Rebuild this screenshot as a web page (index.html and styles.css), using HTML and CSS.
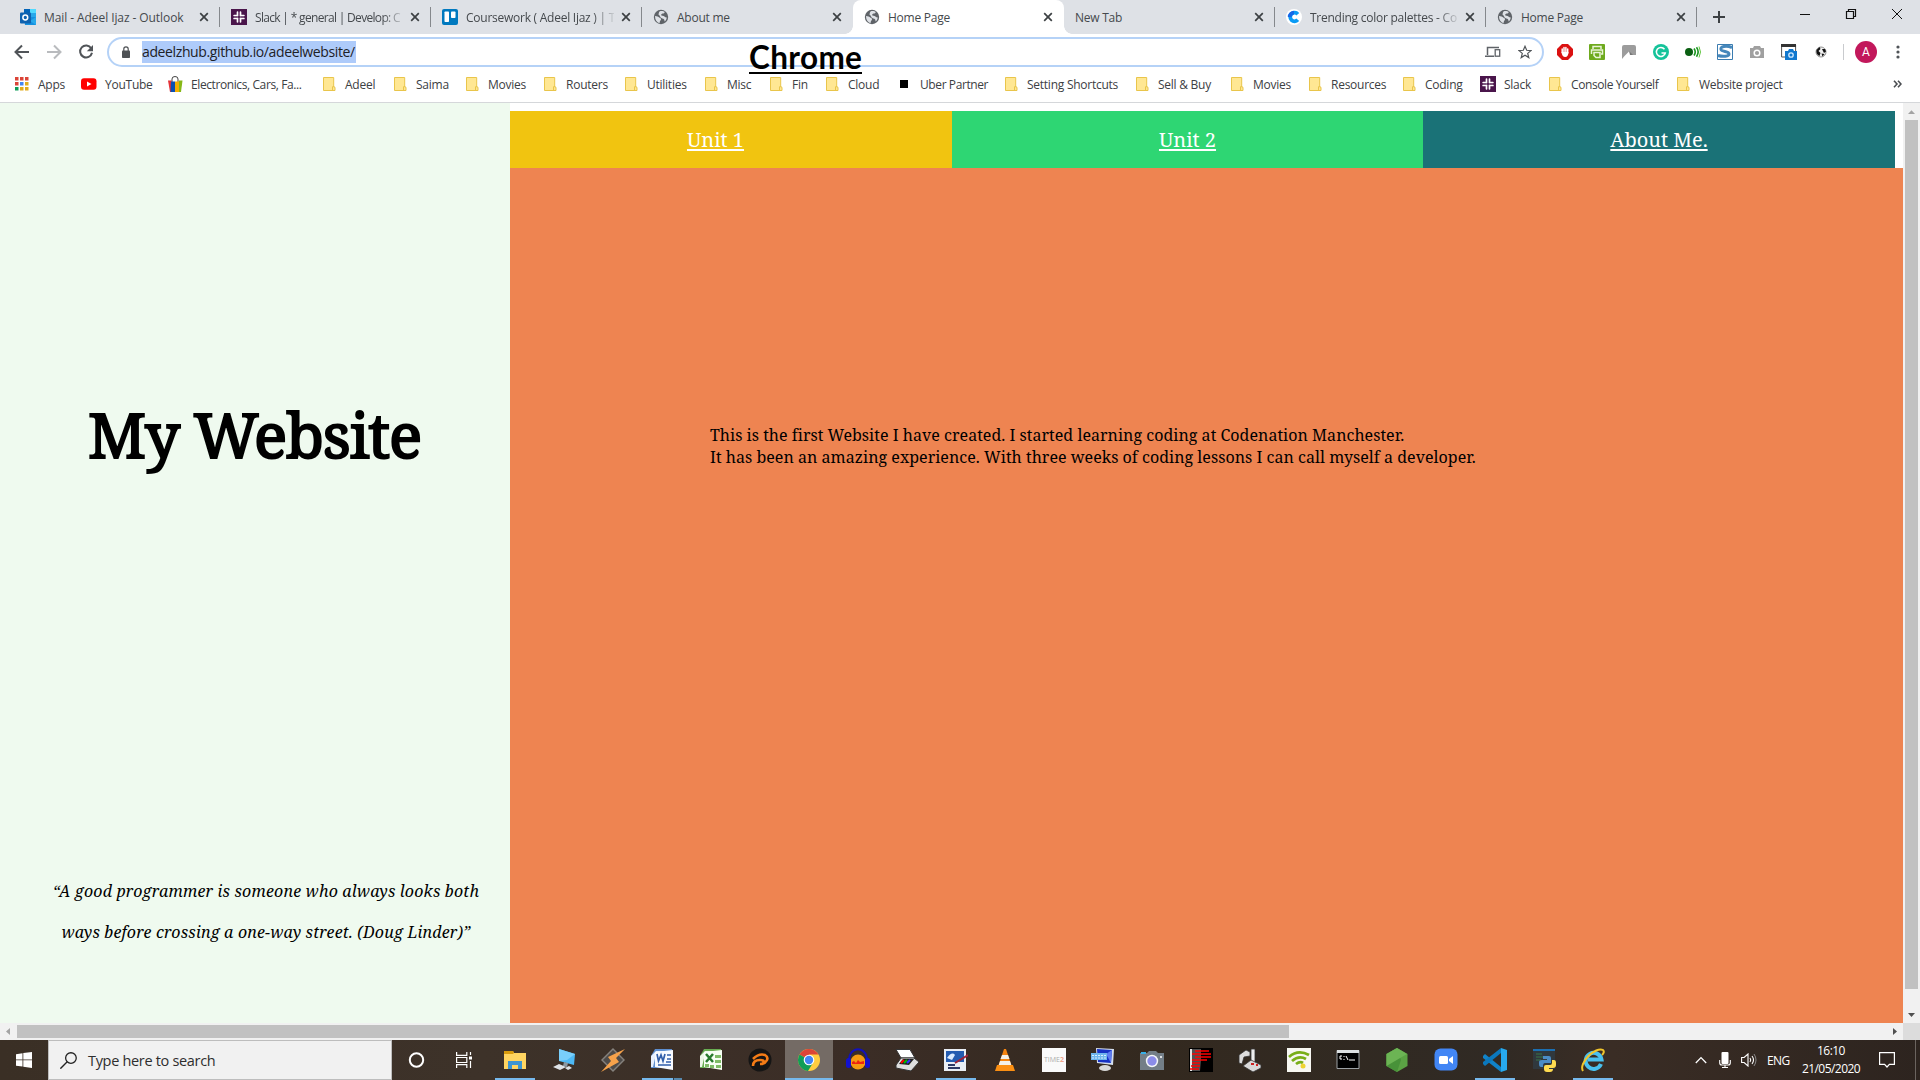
FILE: index.html
```html
<!DOCTYPE html>
<html lang="en">
<head>
<meta charset="utf-8">
<title>Home Page</title>
<link rel="stylesheet" href="styles.css">
</head>
<body>
<svg class="defs" width="0" height="0" aria-hidden="true">
  <symbol id="globe" viewBox="0 0 16 16"><circle cx="8" cy="8" r="7.2" fill="#5f6368"/><path d="M2 7c2 .2 3.500.6 4.300 1.500.8.8 1.800.6 1.700 1.700 0 1-1 1.200-1.200 2.500l-.3 1.500C3.800 13.500 2 11 2 7zM6.500 2.500c1.500-.8 4-.5 5.200.6-.2 1.200-1.200 1.600-2.200 1.500-.8 0-.7 1-1.600 1.200.3 1 1.600.9 2.600 1.300 1 .3 1.300 1.400 3.300 1.300-.2 1.500-.9 3-2.100 4-.5-1.200-.2-2.200-1.400-2.600-1.300-.4-2.800-.8-3.200-2.200C6.800 6.500 6 6 5.300 5.200c.8-.6.3-1.700 1.200-2.700z" fill="#dee1e6"/></symbol>
  <symbol id="x" viewBox="0 0 10 10"><path d="M1.200 1.200l7.600 7.600M8.800 1.200L1.200 8.800" stroke="#3c4043" stroke-width="1.700"/></symbol>
  <symbol id="slack" viewBox="0 0 16 16"><path d="M0 0h16v16H0z" fill="#4a154b"/><path d="M6.600 3.200v3.600M9.400 9.200v3.600M3.200 9.400h3.600M9.200 6.600h3.600M3.200 6.600h.6M12.200 9.400h.6M9.400 3.200v.6M6.600 12.200v.6M9.400 3.200v3.600M6.600 9.200v3.600M3.200 6.600h3.600M9.200 9.400h3.600" stroke="#fff" stroke-width="1.900" stroke-linecap="round"/><path d="M8 2v12M2 8h12" stroke="#4a154b" stroke-width=".8"/></symbol>
  <symbol id="folder" viewBox="0 0 13 14"><path d="M.5.5h10.200v9.200l1.300.6v3.200H.5z" fill="#ffe793" stroke="#e9c54b"/><path d="M9.500 13V9.700h1.700" fill="none" stroke="#e9c54b"/></symbol>
</svg>

<header class="browser">
  <div class="tabs">
    <div class="tab"><svg class="fav" viewBox="0 0 16 16"><path d="M4 0h12v8H4z" fill="#28a8ea"/><path d="M10 0h6v4h-6z" fill="#50d9ff"/><path d="M4 0h6v4H4z" fill="#0364b8"/><path d="M4 8h12v8H5z" fill="#1490df"/><path d="M16 8l-6 4 6 4z" fill="#28a8ea"/><rect y="3.500" width="11" height="11" rx="1" fill="#0f62af"/><circle cx="5.300" cy="8.500" r="2.400" fill="none" stroke="#fff" stroke-width="1.500"/></svg><span class="name wide">Mail - Adeel Ijaz - Outlook</span><svg class="close"><use href="#x"/></svg></div>
    <div class="tab sep"><svg class="fav"><use href="#slack"/></svg><span class="name fade tight">Slack | * general | Develop: C</span><svg class="close"><use href="#x"/></svg></div>
    <div class="tab sep"><svg class="fav" viewBox="0 0 16 16"><rect width="16" height="16" rx="2" fill="#0079bf"/><rect x="2.500" y="2.500" width="4.500" height="10.500" rx=".8" fill="#fff"/><rect x="9" y="2.500" width="4.500" height="6.500" rx=".8" fill="#fff"/></svg><span class="name fade">Coursework ( Adeel Ijaz ) | T</span><svg class="close"><use href="#x"/></svg></div>
    <div class="tab sep"><svg class="fav"><use href="#globe"/></svg><span class="name">About me</span><svg class="close"><use href="#x"/></svg></div>
    <div class="tab active"><svg class="fav"><use href="#globe"/></svg><span class="name">Home Page</span><svg class="close"><use href="#x"/></svg></div>
    <div class="tab"><span class="name">New Tab</span><svg class="close"><use href="#x"/></svg></div>
    <div class="tab sep"><svg class="fav" viewBox="0 0 16 16"><circle cx="8" cy="8" r="8" fill="#fff"/><path d="M11.800 5.200A4.300 4.300 0 1 0 11.800 10.800" fill="none" stroke="#0a9bf5" stroke-width="3.800"/><path d="M8 3.700a4.300 4.300 0 0 0-4.300 4.300" fill="none" stroke="#1668e8" stroke-width="3.800"/></svg><span class="name fade">Trending color palettes - Co</span><svg class="close"><use href="#x"/></svg></div>
    <div class="tab sep"><svg class="fav"><use href="#globe"/></svg><span class="name">Home Page</span><svg class="close"><use href="#x"/></svg></div>
    <div class="tabend sep"><svg width="12" height="12" viewBox="0 0 12 12"><path d="M6 0v12M0 6h12" stroke="#3c4043" stroke-width="2"/></svg></div>
    <div class="winbtns">
      <svg viewBox="0 0 12 12"><path d="M1 6.500h10" stroke="#111"/></svg>
      <svg viewBox="0 0 12 12"><path d="M1.500 3.500h7v7h-7zM3.500 3.500v-2h7v7h-2" fill="none" stroke="#111" stroke-width="1.200"/></svg>
      <svg viewBox="0 0 12 12"><path d="M1 1l10 10M11 1L1 11" stroke="#111"/></svg>
    </div>
  </div>

  <div class="toolbar">
    <div class="navbtns">
      <svg viewBox="0 0 16 16"><path d="M15 8H2M8 1.500L1.500 8 8 14.500" fill="none" stroke="#505458" stroke-width="2"/></svg>
      <svg viewBox="0 0 16 16"><path d="M1 8h13M8 1.500L14.500 8 8 14.500" fill="none" stroke="#b9bbbe" stroke-width="2"/></svg>
      <svg viewBox="0 0 16 16"><path d="M13.200 4.200A6 6 0 1 0 14 8.800" fill="none" stroke="#505458" stroke-width="2"/><path d="M15 1v6.200H8.800z" fill="#505458"/></svg>
    </div>
    <div class="omnibox">
      <svg class="lock" viewBox="0 0 8 12"><rect y="4.500" width="8" height="7.500" rx=".8" fill="#4f5256"/><path d="M1.800 5V3a2.200 2.200 0 0 1 4.400 0v2" fill="none" stroke="#4f5256" stroke-width="1.200"/></svg>
      <span class="url">adeelzhub.github.io/adeelwebsite/</span>
      <svg class="devices" viewBox="0 0 16 12"><path d="M2.500 9V1.500H14M0 10.200h9" fill="none" stroke="#5f6368" stroke-width="1.500"/><rect x="10.200" y="3.700" width="4.500" height="6.500" fill="none" stroke="#5f6368" stroke-width="1.300"/></svg>
      <svg class="star" viewBox="0 0 14 14"><path d="M7 1.300l1.700 4 4.300.3-3.300 2.800 1.100 4.200L7 10.300l-3.800 2.300 1.100-4.200L1 5.600l4.300-.3z" fill="none" stroke="#505458" stroke-width="1.200"/></svg>
    </div>
    <div class="exts">
      <svg viewBox="0 0 16 16"><path d="M5 0h6l5 5v6l-5 5H5l-5-5V5z" fill="#db1010"/><path d="M5.200 8.500V5M7 8V3.500M8.900 8V3.500M10.700 9V5" stroke="#fff" stroke-width="1.500" stroke-linecap="round"/><path d="M4.500 8h7c0 3-1.300 5-3.300 5s-3.500-2-3.700-5z" fill="#fff"/></svg>
      <svg viewBox="0 0 16 16"><rect width="16" height="16" rx="1" fill="#6eaa1e"/><path d="M4 5V2.500h8V5M2.500 10V6h11v4H12M5 8.500h6v5H7l-2-2z" fill="none" stroke="#e9f4d8" stroke-width="1.500"/></svg>
      <svg viewBox="0 0 16 16"><path d="M3 1h10q2 0 2 2v8H11L8 7.500 3.500 12 1 15V3q0-2 2-2z" fill="#9c9c9c"/><path d="M8 7l4 4H9z" fill="#777"/></svg>
      <svg viewBox="0 0 16 16"><circle cx="8" cy="8" r="8" fill="#15c39a"/><path d="M11.500 5.200A4.500 4.500 0 1 0 12.300 9H8.500" fill="none" stroke="#fff" stroke-width="1.500"/></svg>
      <svg viewBox="0 0 16 16"><circle cx="4" cy="8" r="4" fill="#0a5f12"/><path d="M9 4.500q2.500 3.500 0 7M11.500 3.300q3.300 4.700 0 9.400" fill="none" stroke="#18961e" stroke-width="1.600"/><path d="M14 2.500q3 5.500 0 11" fill="none" stroke="#5fc43e"/></svg>
      <svg viewBox="0 0 16 16"><path d="M.5.5h15v15H.5z" fill="#fff" stroke="#3b7cb0"/><path d="M15 3.500C9 1 3 2.500 4 5.500c1 2.500 8 1.500 8 4.500 0 2.500-6 3-11 1.500" fill="none" stroke="#4587bb" stroke-width="3"/></svg>
      <svg viewBox="0 0 16 16"><path d="M5 2h6l1 2h3v10H1V4h3z" fill="#a0a0a0"/><circle cx="8" cy="9" r="2.800" fill="none" stroke="#fff" stroke-width="1.500"/></svg>
      <svg viewBox="0 0 16 16"><path d="M.6 1h14v12H.6z" fill="#fff" stroke="#555"/><path d="M0 0h15v3H0z" fill="#333"/><path d="M4 7h3l1-2h4l1 2h3v9H4z" fill="#1178ce"/><circle cx="10" cy="11" r="2.200" fill="none" stroke="#d2eaff" stroke-width="1.300"/></svg>
      <svg viewBox="0 0 16 16"><circle cx="8" cy="8" r="5" fill="#f0f0f0" stroke="#777" stroke-width=".8"/><path d="M3.500 6l3-3 1 2-2 2 2 2-1 3C4 11 3 9 3.500 6zM9 5l3 0 1 2.500-2 1.500zM8.500 9.500l3 .5-2 2.500z" fill="#111"/></svg>
    </div>
    <span class="bar"></span>
    <span class="avatar">A</span>
    <svg class="menu" viewBox="0 0 4 14"><circle cx="2" cy="2" r="1.600"/><circle cx="2" cy="7" r="1.600"/><circle cx="2" cy="12" r="1.600"/></svg>
  </div>
  <div class="caption">Chrome</div>

  <div class="bookmarks">
    <div><svg class="apps" viewBox="0 0 14 14"><path d="M0 0h3.500v3.500H0zM5 0h3.500v3.500H5zM10 0h3.500v3.500H10zM0 5h3.500v3.500H0z" fill="#db4437"/><path d="M5 5h3.500v3.500H5z" fill="#4285f4"/><path d="M10 5h3.500v3.500H10zM10 10h3.500v3.500H10zM5 10h3.500v3.500H5z" fill="#e2ab1d"/><path d="M0 10h3.500v3.500H0z" fill="#0f9d58"/></svg>Apps</div>
    <div><svg class="ic16" viewBox="0 0 16 16"><rect y="2.300" width="15.500" height="11.400" rx="3" fill="#f00"/><path d="M6 5.500v5L10.500 8z" fill="#fff"/></svg>YouTube</div>
    <div class="tight"><svg class="ic15" viewBox="0 0 15 16"><path d="M4 6V3q0-2.500 3-2.500T10 3v3" fill="none" stroke="#444"/><path d="M0 4.500h3.500v11.500H2z" fill="#e53238"/><path d="M3 5.500h4V16H2.500z" fill="#0b4fb3"/><path d="M7 5.500h4V16H7z" fill="#f5af02"/><path d="M11 4.500h3.500L13 16h-2z" fill="#86b817"/></svg>Electronics, Cars, Fa...</div>
    <div><svg class="fold"><use href="#folder"/></svg>Adeel</div>
    <div><svg class="fold"><use href="#folder"/></svg>Saima</div>
    <div><svg class="fold"><use href="#folder"/></svg>Movies</div>
    <div><svg class="fold"><use href="#folder"/></svg>Routers</div>
    <div><svg class="fold"><use href="#folder"/></svg>Utilities</div>
    <div><svg class="fold"><use href="#folder"/></svg>Misc</div>
    <div><svg class="fold"><use href="#folder"/></svg>Fin</div>
    <div><svg class="fold"><use href="#folder"/></svg>Cloud</div>
    <div class="tight"><i class="uber"></i>Uber Partner</div>
    <div><svg class="fold"><use href="#folder"/></svg>Setting Shortcuts</div>
    <div><svg class="fold"><use href="#folder"/></svg>Sell &amp; Buy</div>
    <div><svg class="fold"><use href="#folder"/></svg>Movies</div>
    <div><svg class="fold"><use href="#folder"/></svg>Resources</div>
    <div><svg class="fold"><use href="#folder"/></svg>Coding</div>
    <div><svg class="ic16"><use href="#slack"/></svg>Slack</div>
    <div class="tight"><svg class="fold"><use href="#folder"/></svg>Console Yourself</div>
    <div><svg class="fold"><use href="#folder"/></svg>Website project</div>
    <div><svg class="more" viewBox="0 0 9 8"><path d="M1 .8L4 4 1 7.200M5 .8L8 4 5 7.200" fill="none" stroke="#4a4d51" stroke-width="1.600"/></svg></div>
  </div>
</header>

<main class="viewport">
  <aside class="side">
    <h1>My Website</h1>
    <p class="quote">“A good programmer is someone who always looks both<br>ways before crossing a one-way street. (Doug Linder)”</p>
  </aside>
  <section class="content">
    <nav class="units">
      <a class="u1" href="#">Unit 1</a>
      <a class="u2" href="#">Unit 2</a>
      <a class="u3" href="#">About Me.</a>
    </nav>
    <div class="intro">
      <p>This is the first Website I have created. I started learning coding at Codenation Manchester.</p>
      <p>It has been an amazing experience. With three weeks of coding lessons I can call myself a developer.</p>
    </div>
  </section>
  <div class="vscroll">
    <svg viewBox="0 0 17 17"><path d="M5 11h7L8.500 7.200z" fill="#a3a3a3"/></svg>
    <div class="thumb"></div>
    <svg viewBox="0 0 17 17"><path d="M5 7h7L8.500 11z" fill="#505050"/></svg>
  </div>
</main>
<div class="hscroll">
  <svg viewBox="0 0 17 17"><path d="M10 5v7L6 8.500z" fill="#a3a3a3"/></svg>
  <div class="track"><div class="thumb"></div></div>
  <svg viewBox="0 0 17 17"><path d="M7 5v7l4-3.500z" fill="#505050"/></svg>
  <div class="corner"></div>
</div>

<footer class="taskbar">
  <div class="start"><svg viewBox="0 0 16 16"><path d="M0 2.200L6.500 1.300v6.200H0zM7.300 1.100L16 0v7.500H7.300zM0 8.300h6.500v6.300L0 13.800zM7.300 8.300H16V16l-8.700-1.200z" fill="#fff"/></svg></div>
  <div class="search"><svg viewBox="0 0 16 16"><circle cx="10.300" cy="5.700" r="5" fill="none" stroke="#222" stroke-width="1.200"/><path d="M6.800 9.200L.3 15.700" stroke="#222" stroke-width="1.300"/></svg><span>Type here to search</span></div>
  <div class="sys"><svg viewBox="0 0 16 16"><circle cx="8" cy="8" r="6.700" fill="none" stroke="#fff" stroke-width="2"/></svg></div>
  <div class="sys"><svg viewBox="0 0 17 16"><path d="M.6 0v3.400h10.200V0M.6 16v-3.400h10.200V16M.6 5.500h10.200v5H.6zM14.500 0v3M14.500 9v7" fill="none" stroke="#fff" stroke-width="1.200"/><path d="M13 4.500h3v3h-3z" fill="#fff"/></svg></div>
  <div class="apps-row">
    <div class="app open"><svg viewBox="0 0 24 24"><path d="M1 3h9l1 2h12v16H1z" fill="#ffd561"/><path d="M1 3h9l1 2-1 1H1z" fill="#d99c0e"/><path d="M5 21v-8h14v8h-4v-4H9v4z" fill="#3c95d2"/></svg></div>
    <div class="app"><svg viewBox="0 0 24 24"><path d="M7 1l16 5-1 11L7 13z" fill="#4db9f5"/><path d="M7 1l16 5-8 6-8 1z" fill="#79cffb"/><path d="M12 14l4 1-1 4-4-1z" fill="#8b98a2"/><path d="M1 19l6-3 7 3-6 3zM13 20l4-2 3 2-4 2z" fill="#dfe4e8"/></svg></div>
    <div class="app"><svg viewBox="0 0 24 24"><path d="M12 0l12 12-12 12L0 12z" fill="#85817d"/><path d="M12 2l10 10-10 10L2 12z" fill="#4e4b49"/><path d="M24 1L7 9l3 4L0 24l18-10-3-4z" fill="#f6a24b"/></svg></div>
    <div class="app open multi"><svg viewBox="0 0 24 24"><path d="M5 1h17v19H1V8z" fill="#5d8ed0"/><path d="M6 3h13v3H6L3 19H1V8z" fill="#e7f0ff"/><path d="M5 4l18-2v20L5 19z" fill="#f7faff"/><path d="M7 6l1.500 7L11 7l2 6 2-7M17 7h4M17 11h4M8 17h13M16 14h5" fill="none" stroke="#315eaa" stroke-width="1.700"/></svg></div>
    <div class="app"><svg viewBox="0 0 24 24"><path d="M5 1h17v19H1V8z" fill="#68ad51"/><path d="M6 3h13v3H6L3 19H1V8z" fill="#ecf7e6"/><path d="M5 4l18-2v20L5 19z" fill="#f7fff4"/><path d="M7 6l7 8M14 6l-7 8" stroke="#287b2d" stroke-width="2.500"/><path d="M16 7h6v3h-6zM16 12h6v3h-6zM6 16h4v3H6zM11 17h4v3h-4zM17 17h5v3h-5z" fill="#7fbc67"/></svg></div>
    <div class="app"><svg viewBox="0 0 24 24"><circle cx="12" cy="12" r="11.500" fill="#151515"/><path d="M5 18q0-6 7-6c5 0 5 4 0 4M5 11q6-6 12-4c5 3 1 8-3 9" fill="none" stroke="#f37b16" stroke-width="2.600"/></svg></div>
    <div class="app current"><svg viewBox="0 0 24 24"><circle cx="12" cy="12" r="11" fill="#ffcd40"/><path d="M12 12L2.500 6.500A11 11 0 0 1 21.500 6.500H12z" fill="#db4437"/><path d="M2.500 6.500A11 11 0 0 0 11 23l5.500-9L12 12z" fill="#0f9d58"/><circle cx="12" cy="12" r="5.300" fill="#fff"/><circle cx="12" cy="12" r="4.200" fill="#4285f4"/></svg></div>
    <div class="app"><svg viewBox="0 0 24 24"><circle cx="12" cy="14" r="7.500" fill="#f59b11"/><path d="M6 14l2-1 2 2 2-3 2 2 4-1v3H6z" fill="#ee2410"/><path d="M3 14C2-3 22-3 21 14" fill="none" stroke="#1212bb" stroke-width="2"/><rect y="10" width="5" height="10" rx="2.500" fill="#1212cf"/><rect x="19" y="10" width="5" height="10" rx="2.500" fill="#1212cf"/></svg></div>
    <div class="app"><svg viewBox="0 0 24 24"><path d="M1 1.500h14l5 8.500H6z" fill="#fff" stroke="#333"/><path d="M1 17l5-7h13l5 4-8 9-15-3z" fill="#dedede" stroke="#333"/><path d="M4 16l4-5h11l-5 6z" fill="#222"/><path d="M6 15l3-3" stroke="#f00" stroke-width="2"/><path d="M9 15l3-3" stroke="#0b0" stroke-width="2"/><path d="M12 15l3-3" stroke="#33f" stroke-width="2"/></svg></div>
    <div class="app open"><svg viewBox="0 0 24 24"><path d="M0 1h22v22H0z" fill="#e9eef5"/><path d="M2 3h18v11H2z" fill="#245cb1"/><path d="M3 10q5-7 8-3l-3 5z" fill="#dcecff"/><path d="M4 17h7M4 20h12" stroke="#2d3863" stroke-width="2"/><path d="M24 7L11 15" stroke="#9d2337" stroke-width="2"/></svg></div>
    <div class="app"><svg viewBox="0 0 24 24"><path d="M11 1h2l6 18H5z" fill="#f58410"/><path d="M9 7h6l1.500 4h-9zM7 13h10l1.300 4H5.700z" fill="#f4f0e8"/><path d="M4 17h16l2 6H2z" fill="#fb8f13"/></svg></div>
    <div class="app"><span class="time2">TIME<b>2</b></span></div>
    <div class="app"><svg viewBox="0 0 24 24"><path d="M5 0l18 1-1 16-16-2z" fill="#d5dfed"/><path d="M6 1l15 1-1 13-13-1z" fill="#1732c4"/><path d="M15 6l6-4-1 13z" fill="#5f7df0"/><path d="M0 5h16v7H0z" fill="#6fb6ec"/><path d="M1 7.500h14M1 10h14" stroke="#d9efff" stroke-dasharray="2 1"/><ellipse cx="14" cy="20" rx="6" ry="3" fill="#d9d9d9"/></svg></div>
    <div class="app"><svg viewBox="0 0 24 24"><path d="M0 5h7l2-2h7l2 2h6v17H0z" fill="#737e87"/><path d="M1 4h5v2H1z" fill="#37b0e8"/><circle cx="12" cy="13" r="6.200" fill="#f3f5f8"/><circle cx="12" cy="13" r="4.700" fill="#8b8ce9"/><circle cx="21" cy="9" r="1" fill="#fff"/></svg></div>
    <div class="app"><svg viewBox="0 0 24 24"><path d="M0 0h24v24H0z"/><path d="M1 1h11v11l-1 11H1z" fill="#e4e4e4"/><path d="M3 1h9v22H3z" fill="#000" fill-opacity=".65"/><path d="M6 3h14M3 6h19M6 9h16M3 12h15M3 15h8M2 18h9M1 21h9" stroke="#f00" stroke-width="1.300"/></svg></div>
    <div class="app"><svg viewBox="0 0 24 24"><path d="M1 15V7l7-5 4 2v4l-6 1-2 7z" fill="#ddd" stroke="#333" stroke-width=".8"/><path d="M13 1h4v14h-4z" fill="#eee" stroke="#333" stroke-width=".8"/><path d="M5 18l8-6 10 5v3l-8 4z" fill="#d9d9d9" stroke="#333" stroke-width=".8"/><path d="M13 16h3M18 17h2" stroke="#c22" stroke-width="2"/></svg></div>
    <div class="app"><svg viewBox="0 0 24 24"><path d="M0 0h24v24H0z" fill="#f7f7f2"/><path d="M2 9Q11 1 22 7M5 13q7-6 14-2M9 16q4-3 7-1" fill="none" stroke="#79ae18" stroke-width="2.800"/><circle cx="16" cy="18" r="2.500" fill="#efd431"/></svg></div>
    <div class="app"><svg viewBox="0 0 24 24"><path d="M1 2.500h22v18H1z" stroke="#9ca1a4"/><path d="M1 2h22v3H1z" fill="#dce0e2"/><path d="M6 8H4v3h2M8 8v1M8 11v1M10 8l2 4M13 12h6" fill="none" stroke="#fff"/></svg></div>
    <div class="app"><svg viewBox="0 0 24 24"><path d="M12 0l10.500 6v12L12 24 1.500 18V6z" fill="#5ba344"/><path d="M12 0l4 12-4 12L1.500 18V6z" fill="#489239"/><path d="M1.500 18L22 6 12 0 1.500 6z" fill="#6cb454"/></svg></div>
    <div class="app"><svg viewBox="0 0 24 24"><rect x=".5" y=".5" width="23" height="22" rx="6" fill="#4286f5"/><rect x="5" y="8" width="9" height="8" rx="1.500" fill="#fff"/><path d="M15 11l4-3v8l-4-3z" fill="#fff"/></svg></div>
    <div class="app open"><svg viewBox="0 0 24 24"><path d="M0 8l2-2 16 13v5L0 10z" fill="#1183c8"/><path d="M0 16l2 2L18 5V0L0 14z" fill="#0b78bd"/><path d="M18 0l6 2v20l-6 2z" fill="#27a9ee"/></svg></div>
    <div class="app"><svg viewBox="0 0 24 24"><path d="M1 1h22v20H1z" fill="#30383d"/><path d="M1 1h22v2H1z" fill="#1c6fb1"/><path d="M4 6h6M4 9h8M4 12h5" stroke="#397648"/><path d="M11 8h6q2 0 2 2v5h-6q-2 0-2 3v1H9q-2 0-2-3v-2q0-2 3-2h5v-1h-4z" fill="#4a8cc6"/><path d="M20 12h2q2 0 2 3v2q0 3-3 3h-4v1h4q0 3-3 3h-3q-3 0-3-3v-2q0-2 2-2h4q2 0 2-2z" fill="#ffdc50"/></svg></div>
    <div class="app open"><svg viewBox="0 0 24 24"><path d="M20 16A8 8 0 1 1 20.500 11.500H7" fill="none" stroke="#49c1ef" stroke-width="4"/><path d="M2 23C-3 15 15-2 22 2q2 2-1 5" fill="none" stroke="#f1c52c" stroke-width="2"/></svg></div>
  </div>
  <div class="tray">
    <svg class="chev" viewBox="0 0 12 8"><path d="M.8 7L6 1.600 11.200 7" fill="none" stroke="#fff" stroke-width="1.300"/></svg>
    <svg class="mic" viewBox="0 0 12 16"><rect x="2.500" width="7" height="12" rx="1" fill="#fff"/><path d="M.7 8v3q0 2 2.300 2h6q2.300 0 2.300-2V8M6 13v2.500M3 15.500h6" fill="none" stroke="#fff" stroke-width="1.100"/></svg>
    <svg class="vol" viewBox="0 0 16 14"><path d="M.6 4.500h2.500L7 1v12L3.100 9.500H.6z" fill="none" stroke="#fff" stroke-width="1.100"/><path d="M9 5q1.500 2 0 4M11 3q3 4 0 8" fill="none" stroke="#fff" stroke-width="1.100"/><path d="M13 1q4 6 0 12" fill="none" stroke="#888"/></svg>
    <span class="lang">ENG</span>
    <div class="clock"><span>16:10</span><span>21/05/2020</span></div>
    <svg class="note" viewBox="0 0 16 16"><path d="M.6.600h14.800v11.800h-5L8 15l-2.400-2.600h-5z" fill="none" stroke="#fff" stroke-width="1.200"/></svg>
  </div>
</footer>
</body>
</html>
```
FILE: styles.css
```css
* { box-sizing: border-box; }
body { margin: 0; width: 1920px; height: 1080px; overflow: hidden; display: flex; flex-direction: column; background: #fff; font-family: "Open Sans", "Noto Sans", sans-serif; }
svg { display: block; flex: none; }
.defs { position: absolute; }

/* Browser chrome */
.browser { position: relative; height: 103px; border-bottom: 1px solid #d5d7da; }
.tabs { display: flex; height: 34px; padding-left: 9px; background: #dee1e6; }
.tab { position: relative; display: flex; align-items: center; width: 211px; padding: 0 11px; font-size: 12px; letter-spacing: -.25px; color: #45494d; }
.sep::before { content: ""; position: absolute; left: -1px; top: 7px; width: 1px; height: 20px; background: #85888c; }
.fav { width: 16px; height: 16px; margin-right: 8px; }
.name { width: 148px; white-space: nowrap; }
.tab > .name:first-child { width: 172px; }
.wide { letter-spacing: -.08px; }
.tight { letter-spacing: -.4px; }
.name.tight { letter-spacing: -.68px; }
.fade { -webkit-mask-image: linear-gradient(90deg, #000 86%, transparent 102%); mask-image: linear-gradient(90deg, #000 86%, transparent 102%); }
.close { width: 10px; height: 10px; margin-left: 7px; }
.active { background: #fff; border-radius: 8px 8px 0 0; }
.active::before, .active::after { content: ""; position: absolute; bottom: 0; width: 8px; height: 8px; }
.active::before { left: -8px; background: radial-gradient(circle at 0 0, #dee1e6 7.500px, #fff 8px); }
.active::after { right: -8px; background: radial-gradient(circle at 100% 0, #dee1e6 7.500px, #fff 8px); }
.tabend { position: relative; display: flex; align-items: center; width: 94px; padding-left: 16px; }
.winbtns { display: flex; gap: 34px; padding: 8px 0 0 8px; }
.winbtns svg { width: 12px; height: 12px; }

.toolbar { display: flex; align-items: center; height: 34px; padding-top: 2px; }
.navbtns { display: flex; gap: 16px; width: 107px; padding-left: 14px; }
.navbtns svg { width: 16px; height: 16px; }
.omnibox { display: flex; align-items: center; width: 1437px; height: 30px; padding-left: 13px; border: 2px solid #b5d2f7; border-radius: 15px; }
.lock { width: 8px; height: 12px; }
.url { width: 214px; height: 22px; margin: 0 auto 0 12px; background: #aecbfa; color: #1d2126; font-size: 14px; line-height: 21px; letter-spacing: -.38px; white-space: nowrap; }
.devices { width: 16px; height: 12px; margin-right: 17px; }
.star { width: 14px; height: 14px; margin-right: 10px; }
.exts { display: flex; gap: 16px; margin-left: 13px; }
.exts svg { width: 16px; height: 16px; }
.bar { width: 1px; height: 16px; margin-left: 14px; background: #c9cbce; }
.avatar { width: 22px; height: 22px; margin-left: 11px; border-radius: 50%; background: #c2185b; color: #fff; font: 12px/22px Roboto, sans-serif; text-align: center; }
.menu { width: 4px; height: 14px; margin-left: 19px; fill: #505458; }
.caption { position: absolute; left: 749px; top: 38px; width: 113px; height: 36px; border-bottom: 2px solid #000; color: #000; font: 700 31.500px/38px Lato, sans-serif; letter-spacing: .35px; white-space: nowrap; }

.bookmarks { display: grid; grid-template-columns: 66px 87px 155px 71px 72px 78px 81px 80px 65px 56px 71px 108px 131px 95px 78px 94px 77px 69px 128px 213px 20px; height: 32px; padding-left: 15px; font-size: 12px; letter-spacing: -.25px; color: #3c4043; white-space: nowrap; }
.bookmarks > div { display: flex; align-items: center; }
.apps { width: 14px; height: 14px; margin-right: 9px; }
.ic16 { width: 16px; height: 16px; margin-right: 8px; }
.ic15 { width: 15px; height: 16px; margin-right: 8px; }
.fold { width: 13px; height: 14px; margin-right: 9px; }
.uber { width: 8px; height: 8px; margin: 0 12px 0 3px; background: #000; }
.more { width: 9px; height: 8px; margin-left: 3px; }

/* Page */
.viewport { display: flex; height: 920px; font-family: "Noto Serif", "DejaVu Serif Condensed", "DejaVu Serif", serif; color: #000; }
.side { display: flex; flex-direction: column; justify-content: space-between; width: 510px; padding: 289px 0 70px; background: #effaef; }
h1 { margin: 0 0 0 88px; font-size: 62px; line-height: 84px; font-weight: 400; letter-spacing: -1.150px; -webkit-text-stroke: 2px #000; white-space: nowrap; }
.quote { margin: 0 0 0 22px; font-size: 16px; line-height: 41px; font-style: italic; letter-spacing: .18px; text-align: center; white-space: nowrap; }
.content { display: flex; flex-direction: column; width: 1393px; padding-top: 8px; }
.units { display: grid; grid-template-columns: 442px 471px 472px; height: 57px; }
.units a { display: flex; justify-content: center; align-items: center; color: #fff; font-size: 20px; text-underline-offset: 2px; text-decoration-thickness: 1.500px; }
.units .u1 { padding-right: 31px; background: #f1c410; }
.u2 { background: #2ed673; }
.u3 { background: #1a7277; }
.intro { flex: 1; padding: 256px 0 0 200px; background: #ee8451; font-size: 16px; line-height: 22px; letter-spacing: .03px; white-space: nowrap; }
.intro p { margin: 0; }
.vscroll { display: flex; flex-direction: column; width: 17px; background: #f1f1f1; }
.vscroll svg, .hscroll svg { width: 17px; height: 17px; }
.vscroll .thumb { height: 869px; margin: 0 2px auto; background: #c1c1c1; }
.hscroll { display: flex; height: 17px; background: #f1f1f1; }
.track { flex: 1; padding: 2px 0; }
.hscroll .thumb { width: 1272px; height: 13px; background: #c1c1c1; }
.corner { width: 17px; background: #dcdcdc; }

/* Taskbar */
.taskbar { display: flex; height: 40px; background: linear-gradient(90deg, #3a2f25, #3d3229 25%, #3b2d26 45%, #33291f 60%, #302a24 78%, #3a2d25 84%, #2d241f); }
.start { width: 48px; padding: 12px 16px; }
.start svg { width: 16px; height: 16px; }
.search { display: flex; align-items: center; width: 344px; padding-left: 11px; border: 1px solid #bdbdbd; background: #f1f1f1; color: #2e2e2e; font-size: 14.500px; letter-spacing: -.32px; }
.search svg { width: 17px; height: 17px; margin-right: 11px; }
.sys { display: flex; justify-content: center; align-items: center; width: 48px; }
.sys svg { width: 17px; height: 16px; }
.apps-row { display: flex; gap: 1px; margin-left: 3px; }
.app { position: relative; display: flex; justify-content: center; align-items: center; width: 48px; height: 40px; }
.app svg { width: 24px; height: 24px; }
.open::after, .current::after { content: ""; position: absolute; left: 4px; right: 4px; bottom: 0; height: 2px; background: #76b9ed; }
.multi::after { background: linear-gradient(90deg, #76b9ed 31px, #2d3b48 31px, #2d3b48 32px, #5688ad 32px); }
.current { background: #746b65; }
.current::after { left: 0; right: 0; }
.time2 { width: 24px; height: 24px; background: #fafafa; color: #aaa; font-size: 7px; line-height: 24px; text-align: center; }
.time2 b { color: #f0a58d; }
.tray { position: relative; display: flex; align-items: center; flex: 1; padding-left: 78px; color: #fff; font-size: 12px; }
.tray::after { content: ""; position: absolute; right: 4px; top: 0; width: 1px; height: 40px; background: #6b645f; }
.chev { width: 12px; height: 8px; }
.mic { width: 12px; height: 16px; margin-left: 12px; }
.vol { width: 16px; height: 14px; margin-left: 10px; }
.lang { width: 24px; margin-left: 10px; letter-spacing: -.6px; }
.clock { display: flex; flex-direction: column; width: 80px; text-align: center; line-height: 18px; letter-spacing: -.55px; }
.note { width: 16px; height: 16px; margin-left: 8px; }
```
